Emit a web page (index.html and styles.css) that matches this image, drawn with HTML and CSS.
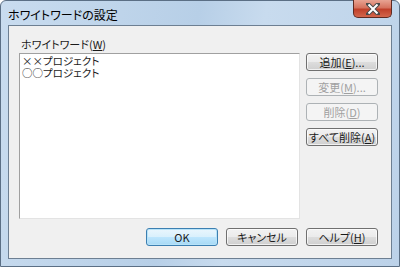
FILE: index.html
```html
<!DOCTYPE html>
<html lang="ja">
<head>
    <meta charset="UTF-8">
    <title>ホワイトワードの設定</title>
    <link rel="stylesheet" href="styles.css">
</head>
<body>
    <div class="window">
        <div class="titlebar">
            <span class="title">ホワイトワードの設定</span>
            <button class="close" title="閉じる">
                <svg width="14" height="12" viewBox="0 0 14 12">
                    <path d="M2 1 L12 11 M12 1 L2 11" stroke="#4a4a4a" stroke-width="4" stroke-linecap="square"/>
                    <path d="M2.5 1.5 L11.5 10.5 M11.5 1.5 L2.5 10.5" stroke="#fff" stroke-width="2"/>
                </svg>
            </button>
        </div>
        <div class="client">
            <div class="main">
                <div class="words">
                    <label for="wordlist">ホワイトワード(<u>W</u>)</label>
                    <div class="listbox" id="wordlist">
                        <div class="item">××プロジェクト</div>
                        <div class="item">○○プロジェクト</div>
                    </div>
                </div>
                <div class="side">
                    <button class="btn">追加(<u>E</u>)...</button>
                    <button class="btn" disabled>変更(<u>M</u>)...</button>
                    <button class="btn" disabled>削除(<u>D</u>)</button>
                    <button class="btn">すべて削除(<u>A</u>)</button>
                </div>
            </div>
            <div class="footer">
                <button class="btn default">OK</button>
                <button class="btn">キャンセル</button>
                <button class="btn">ヘルプ(<u>H</u>)</button>
            </div>
        </div>
    </div>
</body>
</html>
```

FILE: styles.css
```css
body {
    margin: 0;
    font-family: "Noto Sans CJK JP", "Noto Sans", sans-serif;
    font-size: 11px;
    font-feature-settings: "palt";
    color: #1a1a1a;
}
.window {
    width: 400px;
    height: 267px;
    box-sizing: border-box;
    padding: 0 7px 7px 7px;
    display: flex;
    flex-direction: column;
    background: linear-gradient(100deg, #c9dcef 0%, #b7cfe7 45%, #c8dbee 60%, #bcd2e9 100%);
    border: 1px solid #5b6f85;
    border-radius: 6px 6px 0 0;
}
.titlebar {
    height: 24px;
    display: flex;
    align-items: flex-start;
    justify-content: space-between;
}
.title {
    margin-top: 5px;
    font-size: 12px;
    color: #000;
}
.close {
    width: 39px;
    height: 18px;
    margin-top: -1px;
    padding: 0;
    border: 1px solid #5e2a22;
    border-top: none;
    border-radius: 0 0 5px 5px;
    background: linear-gradient(#e8a493 0%, #d6735f 45%, #c0402a 55%, #d3664c 100%);
    display: flex;
    align-items: center;
    justify-content: center;
}
.client {
    flex: 1;
    background: #f0f0f0;
    border: 1px solid #6d7f92;
    padding: 11px 13px 12px 10px;
    display: flex;
    flex-direction: column;
}
.main {
    flex: 1;
    display: flex;
    gap: 6px;
}
.words {
    flex: 1;
    display: flex;
    flex-direction: column;
}
.words label {
    line-height: 15px;
    margin-left: 2px;
}
.listbox {
    flex: 1;
    background: #fff;
    border: 1px solid #a0a0a0;
    border-right-color: #e3e3e3;
    border-bottom-color: #e3e3e3;
    margin-top: 1px;
    padding: 1px 2px;
}
.item {
    line-height: 12px;
    height: 12px;
    font-size: 10.5px;
}
.side {
    width: 72px;
    display: flex;
    flex-direction: column;
    gap: 7px;
    padding-top: 16px;
}
.btn {
    width: 72px;
    height: 18px;
    padding: 0;
    font: inherit;
    font-feature-settings: "palt";
    color: #1a1a1a;
    border: 1px solid #707070;
    border-radius: 3px;
    background: linear-gradient(#f2f2f2 0%, #ebebeb 50%, #dddddd 51%, #cfcfcf 100%);
    box-shadow: inset 0 0 0 1px rgba(255, 255, 255, 0.7);
}
.btn:disabled {
    color: #a0a0a0;
    border-color: #adb2b5;
    background: #f4f4f4;
    box-shadow: none;
}
.btn.default {
    border-color: #3c7fb1;
    background: linear-gradient(#eaf6fd 0%, #d9f0fc 50%, #bee6fd 51%, #a7d9f5 100%);
    box-shadow: inset 0 0 0 1px #b7e3f9;
}
.footer {
    display: flex;
    justify-content: flex-end;
    gap: 8px;
    margin-top: 9px;
}
```
